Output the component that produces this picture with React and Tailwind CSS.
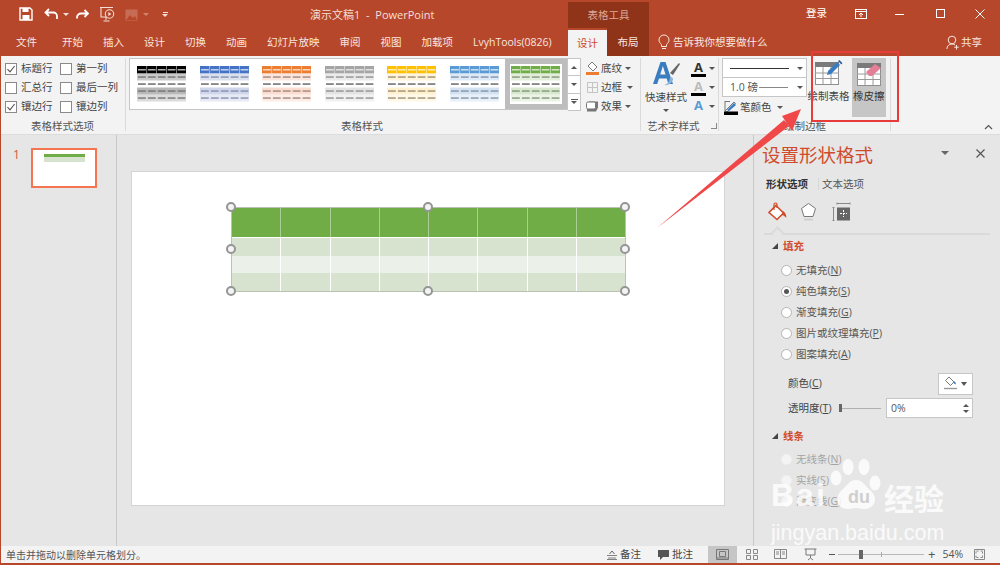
import React from 'react';

const Caret = ({ className = 'border-t-[#555]' }) => (
  <span className={`block w-0 h-0 border-l-[3px] border-r-[3px] border-t-[3px] border-l-transparent border-r-transparent ${className}`} />
);

const Check = ({ on, label, w }) => (
  <div className="flex items-center h-[19px]" style={{ width: w }}>
    <span className="w-[12px] h-[12px] border border-[#8a8a8a] bg-white flex items-center justify-center shrink-0">
      {on && (
        <svg width="10" height="10" viewBox="0 0 10 10"><path d="M1.5 5.2 4 7.8 8.6 2" fill="none" stroke="#555" strokeWidth="1.1" /></svg>
      )}
    </span>
    <span className="ml-[4px] text-[10.5px] leading-none text-[#444] whitespace-nowrap">{label}</span>
  </div>
);

const Thumb = ({ head, band, line = '#8d8d8d' }) => {
  const cols = [0, 1, 2, 3, 4];
  const rows = [
    { y: 0, h: 7.5, fill: head, l: '#ffffffcc' },
    { y: 7.5, h: 7, fill: band, o: 0.75, l: line },
    { y: 14.5, h: 7, fill: 'none', l: '#555' },
    { y: 21.5, h: 7, fill: band, l: line },
    { y: 28.5, h: 7, fill: band, o: 0.5, l: line },
  ];
  return (
    <svg width="49" height="36" viewBox="0 0 49 36" className="shrink-0 block">
      {rows.map((r, i) => (
        <g key={i}>
          {r.fill !== 'none' && <rect x="0" y={r.y} width="49" height={r.h} fill={r.fill} opacity={r.o || 1} />}
          {cols.map((c) => (
            <rect key={c} x={c * 9.9 + 1} y={r.y + r.h / 2 - 0.6} width="7.8" height="1.3" fill={r.l} />
          ))}
        </g>
      ))}
      {[9.4, 19.3, 29.2, 39.1].map((x) => (
        <rect key={x} x={x} y="0" width="0.7" height="7.5" fill="#ffffff" opacity="0.7" />
      ))}
    </svg>
  );
};

const themes = [
  ['#000000', '#b8b8b8', '#6e6e6e'],
  ['#4472c4', '#cfd5ea', '#7f8aa8'],
  ['#ed7d31', '#fbdcd0', '#9a8078'],
  ['#a5a5a5', '#e3e3e3', '#8a8a8a'],
  ['#ffc000', '#fff0cf', '#94896c'],
  ['#5b9bd5', '#d2e2f3', '#7e8ea0'],
];

const Radio = ({ on, dim, label, k }) => (
  <div className="flex items-center h-[21px] pl-[27px]">
    <span className={`w-[11px] h-[11px] rounded-full border flex items-center justify-center ${dim ? 'border-[#f0f0f0] bg-[#f4f4f4]' : 'border-[#b4b4b4] bg-white'}`}>
      {on && <span className="w-[5px] h-[5px] rounded-full bg-[#555]" />}
    </span>
    <span className={`ml-[4px] text-[10.5px] leading-none whitespace-nowrap ${dim ? 'text-[#a4a4a4]' : 'text-[#555]'}`}>
      {label}(<u>{k}</u>)
    </span>
  </div>
);

const Section = ({ title }) => (
  <div className="flex items-center h-[16px] pl-[18px]">
    <span className="w-0 h-0 border-l-[6px] border-l-transparent border-b-[6px] border-b-[#444]" />
    <span className="ml-[5px] text-[10.5px] font-bold leading-none text-[#d04b2a]">{title}</span>
  </div>
);

const TableIcon = () => (
  <svg width="24" height="23" viewBox="0 0 24 23" className="absolute left-0 top-0">
    <rect x="0.5" y="0.5" width="23" height="22" fill="#fff" stroke="#8f8f8f" />
    <rect x="0" y="0" width="24" height="5" fill="#7a7a7a" />
    <path d="M8 5v17M16 5v17M0 11h24M0 16.500h24" stroke="#9a9a9a" strokeWidth="1" />
  </svg>
);

export default function App() {
  const tabs = ['开始', '插入', '设计', '切换', '动画', '幻灯片放映', '审阅', '视图', '加载项', 'LvyhTools(0826)'];
  const colW = [49.4, 49.4, 49.4, 49.4, 49.4, 49.4, 49.4, 48];
  return (
    <div className="relative w-[1000px] h-[565px] overflow-hidden flex flex-col bg-[#e6e6e6] border-l border-[#b7472a] font-['Open_Sans','Noto_Sans_CJK_SC',sans-serif]">
      {/* Title bar */}
      <div className="h-[28px] bg-[#b7472a] flex items-center shrink-0 text-[#f4dfd8] relative">
        <div className="flex items-center pl-[18px] w-[309px]">
          <svg width="14" height="14" viewBox="0 0 14 14"><path d="M1 1h10l2 2v10H1z" fill="none" stroke="#fff" strokeWidth="1.4" /><rect x="3.5" y="1" width="6" height="4" fill="#fff" /><rect x="3.5" y="8" width="7" height="5" fill="#fff" /></svg>
          <svg width="16" height="14" viewBox="0 0 16 14" className="ml-[11px]"><path d="M5 2 1.5 5.5 5 9M2 5.5h7.5a3.5 3.5 0 0 1 3.5 3.5v3" fill="none" stroke="#fff" strokeWidth="1.8" /></svg>
          <span className="ml-[3px]"><Caret className="border-t-[#f4dfd8]" /></span>
          <svg width="14" height="14" viewBox="0 0 14 14" className="ml-[6px]"><path d="M9.5 3 13 6.5 9.5 10M12.5 6.5H6a4 4 0 0 0-4 4v1" fill="none" stroke="#fff" strokeWidth="1.8" /></svg>
          <svg width="16" height="17" viewBox="0 0 16 17" className="ml-[10px]"><path d="M1 1.5h13M2 2v9h8" fill="none" stroke="#f4dfd8" strokeWidth="1.1" /><circle cx="10.5" cy="8" r="4.2" fill="#b7472a" stroke="#f4dfd8" strokeWidth="1.1" /><path d="m9.3 6 3 2-3 2z" fill="#f4dfd8" /><path d="M7 11v3M4.5 15h6" stroke="#f4dfd8" /></svg>
          <svg width="13" height="13" viewBox="0 0 13 13" className="ml-[10px] opacity-40"><rect x="0.5" y="1.5" width="12" height="11" fill="#e0a593" /><path d="m1 12 4-5 3 3 2-2 2 4z" fill="#b7472a" /></svg>
          <span className="ml-[5px] opacity-40"><Caret className="border-t-[#f4dfd8]" /></span>
          <span className="ml-[13px] flex flex-col items-center gap-[1px]">
            <span className="w-[5px] h-px bg-[#f4dfd8]" />
            <Caret className="border-t-[#f4dfd8]" />
          </span>
        </div>
        <span className="text-[11px] leading-none whitespace-nowrap">演示文稿1&nbsp; - &nbsp;PowerPoint</span>
        <div className="absolute left-[567px] top-[2px] w-[81px] h-[26px] bg-[#8f3319] flex items-center justify-center text-[10.5px] leading-none text-[#dca797]">表格工具</div>
        <span className="absolute left-[805px] top-[8px] text-[10.5px] leading-none text-white">登录</span>
        <svg width="12" height="10" viewBox="0 0 12 10" className="absolute left-[854px] top-[9px]"><rect x="0.5" y="0.5" width="11" height="9" fill="none" stroke="#fff" /><path d="M0 2.5h12M6 8V4M4 6l2-2 2 2" fill="none" stroke="#fff" /></svg>
        <span className="absolute left-[894px] top-[14px] w-[9px] h-px bg-white" />
        <span className="absolute left-[935px] top-[9px] w-[9px] h-[9px] border border-white" />
        <svg width="10" height="10" viewBox="0 0 10 10" className="absolute left-[974px] top-[9px]"><path d="m.5.5 9 9M9.5.5l-9 9" stroke="#fff" /></svg>
      </div>

      {/* Tab row */}
      <div className="h-[28px] bg-[#b7472a] flex items-stretch shrink-0 relative text-[#f7e6e0]">
        <div className="flex items-center gap-[20px] pl-[15px] w-[567px] text-[10.5px] leading-none whitespace-nowrap">
          <span className="mr-[5px]">文件</span>
          {tabs.map((t) => <span key={t}>{t}</span>)}
        </div>
        <div className="w-[39px] mt-[2px] bg-[#f3f3f3] text-[#c8492a] text-[10.5px] leading-none flex items-center justify-center">设计</div>
        <div className="w-[42px] bg-[#8f3319] text-[10.5px] leading-none flex items-center justify-center">布局</div>
        <div className="flex items-center ml-[9px]">
          <svg width="12" height="16" viewBox="0 0 12 16"><path d="M3.5 10.5C2 9 1 7.8 1 6a5 5 0 0 1 10 0c0 1.8-1 3-2.5 4.5v2h-5z M4 14.5h4" fill="none" stroke="#f7e6e0" /></svg>
          <span className="ml-[3px] text-[10.5px] leading-none">告诉我你想要做什么</span>
        </div>
        <div className="absolute left-[945px] top-[7px] flex items-center">
          <svg width="14" height="15" viewBox="0 0 14 15"><circle cx="6" cy="5" r="3.8" fill="none" stroke="#f7e6e0" /><path d="M.8 14c.4-3 2-5 5.2-5 1.4 0 2.4.4 3.2 1M10.5 10v4.5M8.2 12.2h4.6" fill="none" stroke="#f7e6e0" /></svg>
          <span className="ml-[1px] text-[10.5px] leading-none">共享</span>
        </div>
      </div>

      {/* Ribbon */}
      <div className="h-[79px] bg-[#f3f3f3] border-b border-[#dcdcdc] flex shrink-0 relative text-[#444]">
        {/* options */}
        <div className="w-[125px] border-r border-[#dadada] mt-[2px] mb-[3px] flex flex-col shrink-0">
          <div className="grid grid-cols-[55px_60px] pl-[4px] pt-[1px]">
            <Check on label="标题行" />
            <Check label="第一列" />
            <Check label="汇总行" />
            <Check label="最后一列" />
            <Check on label="镶边行" />
            <Check label="镶边列" />
          </div>
          <div className="mt-auto text-center text-[10.5px] leading-none text-[#555] pr-[1px]">表格样式选项</div>
        </div>
        {/* gallery */}
        <div className="w-[515px] border-r border-[#dadada] mt-[2px] mb-[3px] flex flex-col shrink-0">
          <div className="flex pl-[3px]">
            <div className="w-[439px] h-[52px] bg-white border border-[#c6c6c6] flex items-center pl-[7px] relative">
              <div className="flex gap-[13.5px]">
                {themes.map((t) => <Thumb key={t[0]} head={t[0]} band={t[1]} line={t[2]} />)}
              </div>
              <div className="ml-[6px] w-[62px] h-[50px] border-[5px] border-[#bdbdbd] flex items-center justify-center bg-white">
                <Thumb head="#70ad47" band="#d8e8cd" line="#7f8f75" />
              </div>
            </div>
            <div className="w-[13px] h-[52px] flex flex-col">
              {[0, 1, 2].map((i) => (
                <div key={i} className="flex-1 bg-white border border-l-0 border-[#c6c6c6] -mb-px flex items-center justify-center">
                  {i === 0 && <span className="w-0 h-0 border-l-[3px] border-r-[3px] border-b-[3px] border-l-transparent border-r-transparent border-b-[#555]" />}
                  {i === 1 && <Caret />}
                  {i === 2 && <span className="flex flex-col items-center gap-[1px]"><span className="w-[7px] h-px bg-[#555]" /><Caret /></span>}
                </div>
              ))}
            </div>
            <div className="ml-[4px] flex flex-col pt-[1px] text-[10.5px] leading-none text-[#444]">
              <div className="h-[19px] flex items-center">
                <svg width="15" height="15" viewBox="0 0 15 15"><path d="m7 1 5 5-4 4-5-5z" fill="#fff" stroke="#777" /><rect x="1" y="11" width="13" height="3" fill="#ed7d31" /></svg>
                <span className="ml-[1px]">底纹</span><span className="ml-[3px]"><Caret /></span>
              </div>
              <div className="h-[19px] flex items-center">
                <svg width="15" height="15" viewBox="0 0 15 15"><path d="M2.5 2.5h10v10h-10zM7.5 2.5v10M2.5 7.5h10" fill="none" stroke="#c4c4c4" /></svg>
                <span className="ml-[1px]">边框</span><span className="ml-[5px]"><Caret /></span>
              </div>
              <div className="h-[19px] flex items-center">
                <svg width="15" height="15" viewBox="0 0 15 15"><path d="M4 2.5h9v6l-2 4H2v-6z" fill="#777" /><rect x="1.5" y="3" width="9" height="7" rx="1.5" fill="#fff" stroke="#777" /></svg>
                <span className="ml-[1px]">效果</span><span className="ml-[3px]"><Caret /></span>
              </div>
            </div>
          </div>
          <div className="mt-auto text-center text-[10.5px] leading-none text-[#555] pl-[8px] pr-[50px]">表格样式</div>
        </div>
        {/* art */}
        <div className="w-[78px] border-r border-[#dadada] mt-[2px] mb-[3px] flex flex-col shrink-0 relative">
          <div className="flex">
            <div className="w-[47px] pl-[3px] flex flex-col items-center pt-[3px]">
              <svg width="29" height="28" viewBox="0 0 29 28">
                <path d="M8.500 1h5L21 23h-4.600l-1.700-5.500H7L5.200 23H1z M8.200 13.500h5.300L10.900 5z" fill="#3a7cc0" fillRule="evenodd" />
                <path d="M18 12 27 2l1 1-7 11z" fill="#666" />
                <path d="M12 24c3 0 6-4 6-8 2 0 3 1 3 2 0 3-4 7-9 6z" fill="#88b4dd" />
              </svg>
              <span className="mt-[3px] text-[10.5px] leading-none whitespace-nowrap text-[#444]">快速样式</span>
              <span className="mt-[6px]"><Caret /></span>
            </div>
            <div className="flex flex-col pt-[1px] pl-[3px]">
              {['#000', '#000', '#5b9bd5'].map((c, i) => (
                <div key={i} className="h-[19px] flex items-center">
                  <span className="relative w-[15px] h-[16px] flex justify-center">
                    <span className={`text-[13px] font-bold leading-[13px] ${i === 2 ? 'text-[#5b9bd5]' : i === 1 ? 'text-[#bbb]' : 'text-[#333]'}`}>A</span>
                    {i < 2 && <span className="absolute left-0 bottom-0 w-[15px] h-[3px] bg-black" />}
                  </span>
                  <span className="ml-[3px]"><Caret /></span>
                </div>
              ))}
            </div>
          </div>
          <div className="mt-auto flex items-center pl-[6px] text-[10.5px] leading-none text-[#555]">
            艺术字样式
            <span className="ml-[11px] w-[6px] h-[6px] border-r border-b border-[#888]" />
          </div>
        </div>
        {/* borders */}
        <div className="w-[172px] border-r border-[#dadada] mt-[2px] mb-[3px] flex flex-col shrink-0 relative">
          <div className="flex">
            <div className="ml-[3px] w-[85px] flex flex-col">
              <div className="h-[20px] bg-white border border-[#c6c6c6] flex items-center pl-[7px] pr-[3px]">
                <span className="w-[59px] h-px bg-[#333]" />
                <span className="ml-auto"><Caret /></span>
              </div>
              <div className="h-[20px] -mt-px bg-white border border-[#c6c6c6] flex items-center pl-[7px] pr-[3px]">
                <span className="text-[10.5px] leading-none text-[#555] whitespace-nowrap">1.0 磅</span>
                <span className="ml-[1px] w-[29px] h-px bg-[#888]" />
                <span className="ml-auto"><Caret /></span>
              </div>
              <div className="h-[19px] mt-[1px] flex items-center pl-[2px]">
                <svg width="14" height="14" viewBox="0 0 14 14"><path d="M1 0v10M1 .5h5M1 10l9-9 1.5 1.5L3 11z" fill="none" stroke="#777" /><path d="M3 9 10 2l2 2-7 6z" fill="#3a7cc0" /><rect x="0" y="10.5" width="14" height="3.5" fill="#000" /></svg>
                <span className="ml-[2px] text-[10.5px] leading-none">笔颜色</span>
                <span className="ml-[5px]"><Caret /></span>
              </div>
            </div>
            <div className="w-[44px] ml-[-1px] pt-[4px] pl-[1px] flex flex-col items-center">
              <div className="relative w-[28px] h-[23px] shrink-0">
                <TableIcon />
                <svg width="17" height="17" viewBox="0 0 17 17" className="absolute left-[11px] -top-[2px]"><path d="m2 11 9-9 3 3-9 9-4 1z" fill="#3a7cc0" /><path d="m12 1 1.400-1 3 3-1 1.500z" fill="#2a5f96" /></svg>
              </div>
              <span className="mt-[6px] text-[10.5px] leading-none whitespace-nowrap text-[#444]">绘制表格</span>
            </div>
            <div className="ml-[2px] w-[34px] h-[59px] bg-[#c6c6c6] pt-[5px] pl-[5px] flex flex-col">
              <div className="relative w-[27px] h-[23px] shrink-0">
                <TableIcon />
                <svg width="18" height="14" viewBox="0 0 18 14" className="absolute left-[8px] top-0"><path d="M1 9 10 1l6 4-9 8H4z" fill="#e57f97" /></svg>
              </div>
              <span className="mt-[5px] -ml-[4px] text-[10.5px] leading-none whitespace-nowrap text-[#333]">橡皮擦</span>
            </div>
          </div>
          <div className="mt-auto pl-[65px] text-[10.5px] leading-none text-[#555]">绘制边框</div>
        </div>
        <svg width="9" height="6" viewBox="0 0 9 6" className="absolute left-[983px] top-[68px]"><path d="m1 5 3.5-3.5L8 5" fill="none" stroke="#555" strokeWidth="1.2" /></svg>
      </div>

      {/* Main */}
      <div className="flex-1 flex min-h-0">
        {/* slide list */}
        <div className="w-[116px] border-r border-[#c8c8c8] flex items-start pt-[13px] pl-[12px] shrink-0">
          <span className="text-[12px] leading-[14px] text-[#d0593a] w-[18px]">1</span>
          <div className="w-[66px] h-[40px] border-2 border-[#f4754f] bg-white pt-[4px] flex flex-col items-center">
            <div className="w-[41px] h-[3px] bg-[#70ad47]" />
            <div className="w-[41px] h-[5px] bg-[#d8e3cf]" />
          </div>
        </div>
        {/* canvas */}
        <div className="w-[636px] pl-[14px] pt-[36px] shrink-0">
          <div className="w-[594px] h-[335px] bg-white border border-[#d4d4d4] pl-[99px] pt-[35px]">
            <div className="relative w-[395px] h-[85px]">
              <div className="w-full h-full flex flex-col border border-[#b9c2b3]">
                <div className="h-[29px] bg-[#70ad47] flex rounded-t-[2px]">
                  {colW.map((w, i) => <div key={i} style={{ width: w }} className="border-r border-[#a9cd92] last:border-r-0" />)}
                </div>
                <div className="h-px bg-white" />
                {['bg-[#d8e3cf]', 'bg-[#ebf0e8]', 'bg-[#d8e3cf]'].map((b, r) => (
                  <div key={r} className={`flex-1 flex ${b}`}>
                    {colW.map((w, i) => <div key={i} style={{ width: w }} className="border-r border-[#ffffff] last:border-r-0" />)}
                  </div>
                ))}
              </div>
              {[[0, 0], [197, 0], [394, 0], [0, 42], [394, 42], [0, 84], [197, 84], [394, 84]].map(([x, y], i) => (
                <span key={i} className="absolute w-[10px] h-[10px] rounded-full bg-[#f4f4f4] border-2 border-[#959595] -translate-x-1/2 -translate-y-1/2" style={{ left: x, top: y }} />
              ))}
            </div>
          </div>
        </div>
        {/* format pane */}
        <div className="flex-1 border-l border-[#c8c8c8] flex flex-col min-w-0 relative">
          <div className="pl-[8px] pt-[7px] text-[18.5px] leading-[26px] text-[#d04b2a] whitespace-nowrap">设置形状格式</div>
          <span className="absolute left-[187px] top-[16px]"><span className="block w-0 h-0 border-l-[4px] border-r-[4px] border-t-[4px] border-l-transparent border-r-transparent border-t-[#666]" /></span>
          <svg width="9" height="9" viewBox="0 0 9 9" className="absolute left-[222px] top-[14px]"><path d="m.5.5 8 8M8.5.5l-8 8" stroke="#555" strokeWidth="1.2" /></svg>
          <div className="flex items-center pl-[12px] mt-[9px] h-[14px] text-[10.5px] leading-none">
            <span className="font-bold text-[#333]">形状选项</span>
            <span className="ml-[10px] mr-[3px] w-px h-[12px] bg-[#d6d6d6]" />
            <span className="text-[#555]">文本选项</span>
          </div>
          <div className="flex items-center pl-[13px] mt-[10px] h-[22px]">
            <svg width="20" height="20" viewBox="0 0 20 20"><path d="M9 3.500 16.500 11 10 17.500 2 10.500z" fill="#fff" stroke="#d04b2a" strokeWidth="1.6" /><path d="M7 8V2.500a1.500 1.500 0 0 1 3 0V6" fill="none" stroke="#d04b2a" strokeWidth="1.2" /><path d="M16 9c2.500 2 3.800 4 3.200 7-.9-1.500-2-2.300-4.200-3z" fill="#d04b2a" /></svg>
            <svg width="17" height="20" viewBox="0 0 17 20" className="ml-[13px]"><path d="M8.500 1.500 15.500 6.500 13 14.500H4L1.500 6.500z" fill="#fff" stroke="#777" /><path d="M4 17.500h9" stroke="#cfcfcf" strokeWidth="2" /></svg>
            <svg width="19" height="20" viewBox="0 0 19 20" className="ml-[15px]"><rect x="5" y="5.500" width="13" height="13" fill="#666" /><path d="M11.500 8v7M8 11.500h7" stroke="#fff" strokeDasharray="2 1" /><path d="M5 1.500h13M5 .5v2M18 .5v2M1.500 5.500v13M.5 5.500h2M.5 18.500h2" stroke="#888" /></svg>
          </div>
          <div className="relative mt-[10px] mx-[10px] h-[2px] bg-[#dadada]">
            <span className="absolute left-[9px] -top-[5px] w-[9px] h-[9px] rotate-45 bg-[#e6e6e6] border-l-2 border-t-2 border-[#dadada]" />
          </div>
          <div className="mt-[3px]"><Section title="填充" /></div>
          <div className="mt-[6px] flex flex-col">
            <Radio label="无填充" k="N" />
            <Radio on label="纯色填充" k="S" />
            <Radio label="渐变填充" k="G" />
            <Radio label="图片或纹理填充" k="P" />
            <Radio label="图案填充" k="A" />
          </div>
          <div className="mt-[7px] flex items-center pl-[34px] pr-[27px] h-[23px] text-[10.5px] leading-none text-[#444]">
            <span>颜色(<u>C</u>)</span>
            <div className="ml-auto w-[35px] h-[22px] bg-white border border-[#c6c6c6] flex items-center pl-[4px]">
              <svg width="15" height="15" viewBox="0 0 15 15"><path d="m6 1 5 5-3.500 3.500-5-5z" fill="#fff" stroke="#777" /><path d="M11 5.500a2 2 0 0 1 1.500 3l-1.500-1z" fill="#3a7cc0" /><path d="M1 12.500h13" stroke="#999" strokeWidth="1.400" /></svg>
              <span className="ml-[3px]"><span className="block w-0 h-0 border-l-[3.500px] border-r-[3.500px] border-t-[4px] border-l-transparent border-r-transparent border-t-[#555]" /></span>
            </div>
          </div>
          <div className="mt-[3px] flex items-center pl-[34px] pr-[27px] h-[20px] text-[10.5px] leading-none text-[#444]">
            <span className="whitespace-nowrap">透明度(<u>T</u>)</span>
            <span className="ml-[7px] w-[3px] h-[8px] bg-[#666]" />
            <span className="w-[39px] h-px bg-[#b0b0b0]" />
            <div className="ml-auto w-[87px] h-[20px] bg-white border border-[#c6c6c6] flex items-center pl-[4px] pr-[3px] text-[#555]">
              0%
              <span className="ml-auto flex flex-col gap-[3px]">
                <span className="block w-0 h-0 border-l-[3.500px] border-r-[3.500px] border-b-[3px] border-l-transparent border-r-transparent border-b-[#555]" />
                <span className="block w-0 h-0 border-l-[3.500px] border-r-[3.500px] border-t-[3px] border-l-transparent border-r-transparent border-t-[#555]" />
              </span>
            </div>
          </div>
          <div className="mt-[10px]"><Section title="线条" /></div>
          <div className="mt-[5px] flex flex-col">
            <Radio dim label="无线条" k="N" />
            <Radio dim label="实线" k="S" />
            <Radio dim label="渐变线" k="G" />
          </div>
        </div>
      </div>

      {/* Status bar */}
      <div className="h-[19px] bg-[#f3f3f3] border-b-2 border-[#b7472a] flex items-center shrink-0 relative text-[10.5px] leading-none text-[#555]">
        <span className="pl-[5px] w-[606px] text-[10px] whitespace-nowrap">单击并拖动以删除单元格划分。</span>
        <svg width="10" height="10" viewBox="0 0 10 10" className="shrink-0"><path d="M0 5.500h10M1 8h8M0 9.500h10" stroke="#666" fill="none" strokeWidth=".8" /><path d="m2.500 4 2.500-3 2.500 3" fill="none" stroke="#666" /></svg>
        <span className="ml-[3px] w-[37px] text-[#444]">备注</span>
        <svg width="13" height="12" viewBox="0 0 13 12" className="shrink-0"><path d="M1 1h11v7H6l-3 3V8H1z" fill="#555" /></svg>
        <span className="ml-[2px] w-[36px] text-[#444]">批注</span>
        <div className="w-[29px] h-[17px] bg-[#c6c6c6] flex items-center justify-center shrink-0">
          <svg width="13" height="11" viewBox="0 0 13 11"><path d="M.5.500h12v10H.5zM3.500 2.500h6v5h-6zM.5 9h12" fill="none" stroke="#777" /></svg>
        </div>
        <svg width="12" height="11" viewBox="0 0 12 11" className="ml-[9px] shrink-0"><path d="M.5.500h4v4h-4zM7.500.500h4v4h-4zM.5 6.500h4v4h-4zM7.500 6.500h4v4h-4z" fill="none" stroke="#888" /></svg>
        <svg width="13" height="11" viewBox="0 0 13 11" className="ml-[16px] shrink-0"><path d="M.5.500h12v9H.5zM6.500.500v9M2 3h3M2 5h3M8 3h3M8 5h3" fill="none" stroke="#888" /></svg>
        <svg width="13" height="13" viewBox="0 0 13 13" className="ml-[17px] shrink-0"><path d="M.5 1h12M2 1v6h9V1M6.500 7v3M4 12l2.500-2L9 12" fill="none" stroke="#777" /></svg>
        <span className="ml-[12px] w-[6px] h-[1.5px] bg-[#555] shrink-0" />
        <div className="relative ml-[3px] w-[86px] h-px bg-[#b8b8b8] shrink-0">
          <span className="absolute left-[21px] -top-[4px] w-[4px] h-[9px] bg-[#666]" />
          <span className="absolute left-[43px] -top-[2px] w-px h-[5px] bg-[#aaa]" />
        </div>
        <span className="ml-[4px] text-[13px] leading-none text-[#555]">+</span>
        <span className="ml-[7px] text-[#555]">54%</span>
        <svg width="11" height="11" viewBox="0 0 11 11" className="ml-[11px] shrink-0"><path d="M.5.500h10v10H.5zM2.500 2h2M2 2.500v2M6.500 2h2M8.500 2.500v2M2 6.500v2M2.500 8.500h2M8.500 6.500v2M6.500 8.500h2" fill="none" stroke="#888" /></svg>
      </div>

      {/* Callout: arrow + highlight box over the ribbon */}
      <svg width="1000" height="565" viewBox="0 0 1000 565" className="absolute left-[-1px] top-0 pointer-events-none">
        <path d="M657 228 784 120 789 126z" fill="#f04848" />
        <path d="M801 109 782 116 792 131z" fill="#f04848" />
        <rect x="812" y="52" width="86" height="69" fill="none" stroke="#e83c3c" strokeWidth="2" />
      </svg>

      {/* Baidu watermark */}
      <div className="absolute left-[767px] top-[459px] w-[190px] h-[86px] pointer-events-none text-white/80">
        <svg width="52" height="52" viewBox="0 0 52 52" className="absolute left-[62px] top-0">
          <g fill="#ffffff" fillOpacity="0.8">
            <ellipse cx="6" cy="19" rx="5.500" ry="7.500" />
            <ellipse cx="18" cy="8" rx="5.500" ry="8" />
            <ellipse cx="34" cy="8" rx="5.500" ry="8" />
            <ellipse cx="45" cy="24" rx="5.500" ry="7.500" />
            <path d="M26 21c7 0 9 6 15 11 7 6 5 18-7 18-3 0-5-1-8-1s-5 1-8 1C6 50 5 38 11 32c6-5 8-11 15-11z" />
          </g>
        </svg>
        <span className="absolute left-[3px] top-[20px] text-[32px] font-bold leading-[32px] tracking-[2px] font-['Liberation_Sans',sans-serif]">Bai</span>
        <span className="absolute left-[80px] top-[29px] text-[18px] font-bold leading-[18px] text-[#cfcfcf] font-['Liberation_Sans',sans-serif]">du</span>
        <span className="absolute left-[116px] top-[23px] text-[30px] font-bold leading-[34px] whitespace-nowrap">经验</span>
        <span className="absolute left-[3px] top-[62px] text-[21.5px] leading-[24px] whitespace-nowrap font-['Liberation_Sans',sans-serif]">jingyan.baidu.com</span>
      </div>
    </div>
  );
}
